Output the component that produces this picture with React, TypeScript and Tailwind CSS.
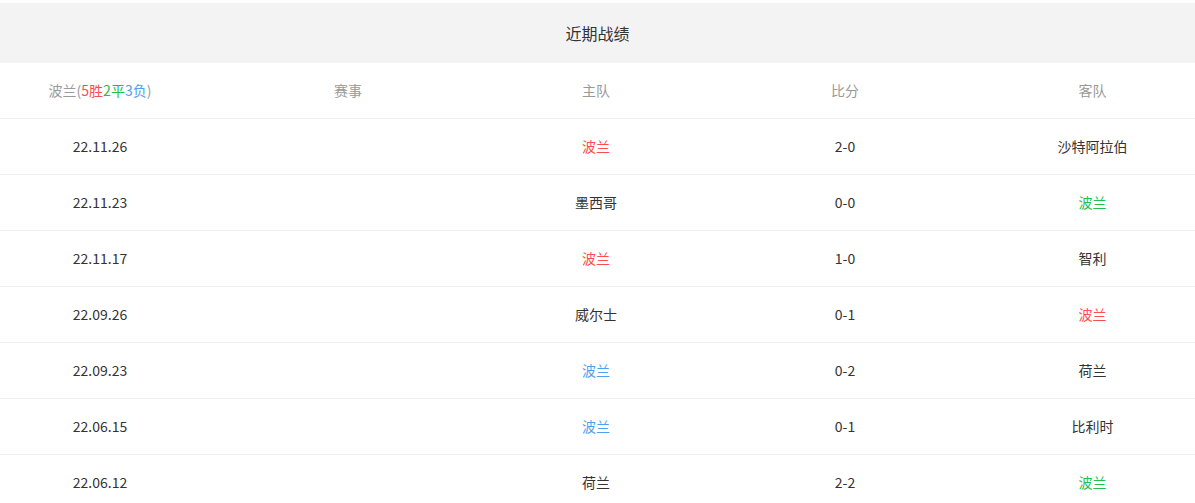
const RED = "text-[#ff4d4d]";
const GREEN = "text-[#21c04a]";
const BLUE = "text-[#4da1f5]";
const DARK = "text-[#333333]";

type Match = {
  date: string;
  home: string;
  homeColor: string;
  score: string;
  away: string;
  awayColor: string;
};

const matches: Match[] = [
  { date: "22.11.26", home: "波兰", homeColor: RED, score: "2-0", away: "沙特阿拉伯", awayColor: DARK },
  { date: "22.11.23", home: "墨西哥", homeColor: DARK, score: "0-0", away: "波兰", awayColor: GREEN },
  { date: "22.11.17", home: "波兰", homeColor: RED, score: "1-0", away: "智利", awayColor: DARK },
  { date: "22.09.26", home: "威尔士", homeColor: DARK, score: "0-1", away: "波兰", awayColor: RED },
  { date: "22.09.23", home: "波兰", homeColor: BLUE, score: "0-2", away: "荷兰", awayColor: DARK },
  { date: "22.06.15", home: "波兰", homeColor: BLUE, score: "0-1", away: "比利时", awayColor: DARK },
  { date: "22.06.12", home: "荷兰", homeColor: DARK, score: "2-2", away: "波兰", awayColor: GREEN },
];

const cols = "grid grid-cols-[200px_296px_200px_298px_1fr] items-center";

export default function App() {
  return (
    <div
      className="w-[1195px] h-[503px] overflow-hidden bg-white pt-[3px] text-[14px]"
      style={{ fontFamily: '"Noto Sans CJK SC", "Noto Sans", sans-serif' }}
    >
      <div className="h-[60px] bg-[#f3f3f3] flex items-center justify-center text-[#333333] text-[16px]">
        近期战绩
      </div>

      {/* column headings */}
      <div className={`${cols} h-[56px] border-b border-[#f0f0f0] text-[#999999] text-center`}>
        <div>
          波兰(<span className="text-[#ff4d4d]">5胜</span>
          <span className="text-[#21c04a]">2平</span>
          <span className="text-[#4da1f5]">3负</span>)
        </div>
        <div>赛事</div>
        <div>主队</div>
        <div>比分</div>
        <div className="pr-[4px]">客队</div>
      </div>

      {matches.map((m) => (
        <div
          key={m.date}
          className={`${cols} h-[56px] border-b border-[#f0f0f0] text-center text-[#333333]`}
        >
          <div>{m.date}</div>
          <div></div>
          <div className={m.homeColor}>{m.home}</div>
          <div>{m.score}</div>
          <div className={`pr-[4px] ${m.awayColor}`}>{m.away}</div>
        </div>
      ))}
    </div>
  );
}
